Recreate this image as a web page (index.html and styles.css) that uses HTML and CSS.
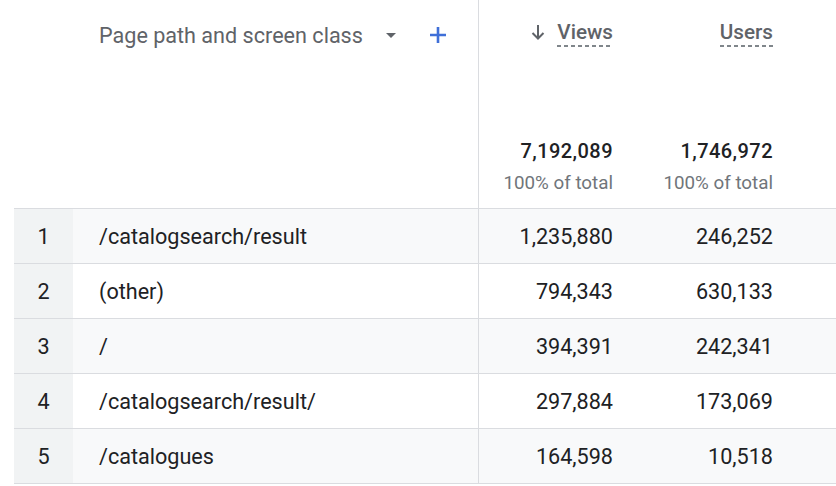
FILE: index.html
```html
<!DOCTYPE html>
<html>
<head>
<meta charset="utf-8">
<link rel="stylesheet" href="styles.css">
</head>
<body>
<div class="table">
  <div class="head">
    <div class="dimhead">
      <span class="dimtitle">Page path and screen class</span>
      <svg class="caret" width="10" height="5" viewBox="0 0 10 5"><path d="M0 0h10L5 5z" fill="#5f6368"/></svg>
      <svg class="plus" width="16" height="16" viewBox="0 0 16 16"><path d="M8 0v16M0 8h16" stroke="#3f6fd8" stroke-width="2.6"/></svg>
    </div>
    <div class="metric">
      <div class="mtitle"><svg class="arrow" width="14" height="15" viewBox="0 0 14 15"><path d="M7 0v13M1.5 8l5.5 5.5L12.5 8" stroke="#5f6368" stroke-width="2" fill="none"/></svg><span class="ul">Views</span></div>
      <div class="total">7,192,089</div>
      <div class="pct">100% of total</div>
    </div>
    <div class="metric">
      <div class="mtitle"><span class="ul">Users</span></div>
      <div class="total">1,746,972</div>
      <div class="pct">100% of total</div>
    </div>
    <div class="metric extra"></div>
  </div>
  <div class="row odd"><div class="num">1</div><div class="dim">/catalogsearch/result</div><div class="val vfirst">1,235,880</div><div class="val">246,252</div><div class="val extra"></div></div>
  <div class="row"><div class="num">2</div><div class="dim">(other)</div><div class="val vfirst">794,343</div><div class="val">630,133</div><div class="val extra"></div></div>
  <div class="row odd"><div class="num">3</div><div class="dim">/</div><div class="val vfirst">394,391</div><div class="val">242,341</div><div class="val extra"></div></div>
  <div class="row"><div class="num">4</div><div class="dim">/catalogsearch/result/</div><div class="val vfirst">297,884</div><div class="val">173,069</div><div class="val extra"></div></div>
  <div class="row odd"><div class="num">5</div><div class="dim">/catalogues</div><div class="val vfirst">164,598</div><div class="val">10,518</div><div class="val extra"></div></div>
</div>
</body>
</html>
```
FILE: styles.css
```css
html, body {
  margin: 0;
  padding: 0;
  background: #fff;
  overflow: hidden;
  width: 836px;
  height: 486px;
}
body {
  font-family: Roboto, "Liberation Sans", sans-serif;
  color: #202124;
}
.table {
  margin-left: 14px;
  width: 822px;
}
.head {
  display: grid;
  grid-template-columns: 464px 160px 160px 38px;
  height: 208px;
  border-bottom: 1px solid #dadce0;
}
.dimhead {
  display: flex;
  align-items: center;
  height: 70px;
  padding-left: 85px;
  color: #5f6368;
  font-size: 21.6px;
}
.caret { margin-left: 23px; margin-top: 1px; }
.plus { margin-left: 34px; }
.metric {
  display: flex;
  flex-direction: column;
  align-items: flex-end;
  padding-right: 25px;
  border-left: 1px solid #dadce0;
}
.metric + .metric { border-left: none; }
.mtitle {
  height: 62px;
  display: flex;
  align-items: center;
  color: #5f6368;
  font-size: 20.7px;
  font-weight: 500;
}
.arrow { margin-right: 12px; margin-top: 2px; }
.ul {
  padding-bottom: 3px;
  background-image: linear-gradient(to right, #80868b 4px, transparent 4px);
  background-size: 7px 2px;
  background-repeat: repeat-x;
  background-position: 0 100%;
  margin-top: 4px;
}
.total {
  margin-top: 77px;
  font-size: 20px;
  font-weight: 500;
  letter-spacing: 0.45px;
  line-height: 24px;
}
.pct {
  margin-top: 9px;
  font-size: 18.8px;
  color: #70757a;
  line-height: 22px;
}
.row {
  display: grid;
  grid-template-columns: 59px 405px 160px 160px 38px;
  height: 54px;
  border-bottom: 1px solid #dadce0;
  font-size: 21.6px;
  align-items: center;
}
.row.odd { background: #f8f9fa; }
.row > div { height: 100%; display: flex; align-items: center; }
.num {
  background: #f1f3f4;
  justify-content: center;
}
.dim { padding-left: 26px; }
.val {
  justify-content: flex-end;
  padding-right: 25px;
}
.vfirst { border-left: 1px solid #dadce0; }
.val.extra { padding: 0; }
```
